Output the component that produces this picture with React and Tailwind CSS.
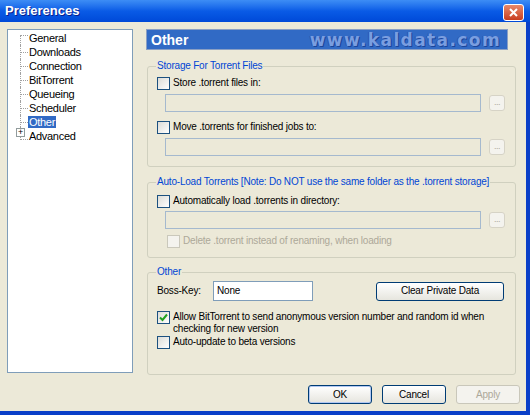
import React from 'react';

const Checkbox = ({ checked, disabled }) => (
  <span
    className={
      'w-[13px] h-[13px] shrink-0 border flex items-center justify-center ' +
      (disabled
        ? 'border-[#CAC8BB] bg-[#F4F3EE]'
        : 'border-[#1C5180] bg-gradient-to-br from-[#DCDCD7] to-white')
    }
  >
    {checked && (
      <svg width="9" height="9" viewBox="0 0 9 9">
        <path d="M1 4.5 L3.5 7 L8 1.5" fill="none" stroke="#21A121" strokeWidth="2" />
      </svg>
    )}
  </span>
);

const CheckRow = ({ label, checked, disabled, className = '' }) => (
  <label className={'flex items-start gap-[3px] ' + className}>
    <Checkbox checked={checked} disabled={disabled} />
    <span className={disabled ? 'text-[#ACA899]' : 'text-black'}>{label}</span>
  </label>
);

const PathRow = ({ className = '' }) => (
  <div className={'flex items-center gap-[8px] pl-[8px] ' + className}>
    <div className="w-[316px] h-[18px] border border-[#A5B9CE] bg-[#ECE9D8]" />
    <div className="w-[16px] h-[16px] rounded-[3px] border border-[#D6D3C6] bg-[#F4F3EE] flex items-end justify-center pb-[3px]">
      <span className="text-[9px] leading-[9px] tracking-[-0.5px] text-[#ACA899]">...</span>
    </div>
  </div>
);

const XpButton = ({ children, className = '', def, disabled }) => (
  <button
    className={
      'h-[19px] rounded-[3px] border ' +
      (disabled
        ? 'border-[#C9C7BA] bg-[#F4F3EE] text-[#ACA899] '
        : 'border-[#003C74] bg-gradient-to-b from-white to-[#E6E5DE] text-black ') +
      (def ? 'shadow-[inset_0_0_0_1px_#B2C8F2] ' : '') +
      className
    }
  >
    {children}
  </button>
);

const treeItems = ['General', 'Downloads', 'Connection', 'BitTorrent', 'Queueing', 'Scheduler', 'Other', 'Advanced'];

export default function App() {
  return (
    <div className="w-[530px] h-[415px] flex flex-col font-['Liberation_Sans',sans-serif] text-[10px] leading-[12px] tracking-[-0.2px] bg-[#0A3FC8]">
      {/* title bar */}
      <div className="h-[22px] shrink-0 flex items-center justify-between pl-[5px] pr-[6px] bg-gradient-to-b from-[#3D8DF5] via-[#0A5BE6] to-[#0049D8]">
        <span className="text-white font-bold text-[13px] tracking-normal [text-shadow:1px_1px_0_#0A1E8C]">Preferences</span>
        <div className="w-[21px] h-[17px] mt-[2px] rounded-[3px] border border-white bg-gradient-to-b from-[#E88868] to-[#C83C1E] flex items-center justify-center">
          <svg width="9" height="9" viewBox="0 0 9 9">
            <path d="M1 1 L8 8 M8 1 L1 8" stroke="white" strokeWidth="2" />
          </svg>
        </div>
      </div>

      {/* client area */}
      <div className="flex-1 bg-[#ECE9D8] mr-[4px] mb-[4px] flex flex-col">
        <div className="flex pt-[7px] pl-[7px]">
          {/* tree */}
          <div className="w-[126px] h-[344px] shrink-0 bg-white border border-[#7F9DB9] pt-[1px] text-[11px] tracking-[-0.3px]">
            {treeItems.map((item, i) => (
              <div key={item} className="h-[14px] flex items-center">
                <span className="w-[12px] shrink-0" />
                <span
                  className={
                    'relative w-[8px] h-full shrink-0 flex items-center border-l border-dotted border-[#A0A0A0] ' +
                    (i === 0 ? 'mt-[7px] h-[7px] items-start ' : '') +
                    (i === treeItems.length - 1 ? 'mb-[7px] h-[7px] items-end ' : '')
                  }
                >
                  <span className="w-full border-t border-dotted border-[#A0A0A0]" />
                  {item === 'Advanced' && (
                    <span className="absolute left-[-5px] top-[2px] w-[9px] h-[9px] border border-[#919B9C] bg-white flex items-center justify-center text-[9px] leading-[7px] text-black">
                      +
                    </span>
                  )}
                </span>
                <span
                  className={
                    'px-[1px] leading-[12px] ' +
                    (item === 'Other' ? 'bg-[#316AC5] text-white' : 'text-black')
                  }
                >
                  {item}
                </span>
              </div>
            ))}
          </div>

          {/* right side */}
          <div className="ml-[13px] w-[370px] flex flex-col">
            <div className="w-[362px] h-[21px] bg-[#316AC5] border border-[#8A9FC4] flex items-center justify-between pl-[4px] pr-[6px]">
              <span className="text-white font-bold text-[14px] tracking-normal">Other</span>
              <span className="text-[#7A9EE0] font-['DejaVu_Sans',sans-serif] font-bold text-[17px] tracking-[1.4px] [text-shadow:1px_1px_0_#1B459A,-1px_0_0_#2A58B0]">
                www.kaldata.com
              </span>
            </div>

            <fieldset className="mt-[10px] ml-px border border-[#D0D0BF] rounded-[3px] px-[9px] pb-[10px]">
              <legend className="text-[#0046D5] px-[1px] ml-[-1px]">Storage For Torrent Files</legend>
              <CheckRow className="mt-[5px]" label="Store .torrent files in:" />
              <PathRow className="mt-[4px]" />
              <CheckRow className="mt-[9px]" label="Move .torrents for finished jobs to:" />
              <PathRow className="mt-[4px]" />
            </fieldset>

            <fieldset className="mt-[9px] ml-px border border-[#D0D0BF] rounded-[3px] px-[9px] pb-[9px]">
              <legend className="text-[#0046D5] px-[1px] ml-[-1px]">
                Auto-Load Torrents [Note: Do NOT use the same folder as the .torrent storage]
              </legend>
              <CheckRow className="mt-[7px]" label="Automatically load .torrents in directory:" />
              <PathRow className="mt-[3px]" />
              <CheckRow className="mt-[6px] ml-[10px]" disabled label="Delete .torrent instead of renaming, when loading" />
            </fieldset>

            <fieldset className="mt-[8px] ml-px h-[109px] border border-[#D0D0BF] rounded-[3px] px-[9px]">
              <legend className="text-[#0046D5] px-[1px] ml-[-1px]">Other</legend>
              <div className="mt-[3px] flex items-center">
                <span className="w-[56px]">Boss-Key:</span>
                <div className="w-[100px] h-[20px] bg-white border border-[#7F9DB9] flex items-center px-[3px]">None</div>
                <XpButton className="ml-auto mr-[2px] w-[128px]">Clear Private Data</XpButton>
              </div>
              <CheckRow
                className="mt-[10px]"
                checked
                label={
                  <>
                    Allow BitTorrent to send anonymous version number and random id when
                    <br />
                    checking for new version
                  </>
                }
              />
              <CheckRow className="mt-[1px]" label="Auto-update to beta versions" />
            </fieldset>
          </div>
        </div>

        <div className="mt-auto mb-[7px] flex justify-end gap-[10px] pr-[6px]">
          <XpButton def className="w-[64px]">OK</XpButton>
          <XpButton className="w-[64px]">Cancel</XpButton>
          <XpButton disabled className="w-[64px]">Apply</XpButton>
        </div>
      </div>
    </div>
  );
}
